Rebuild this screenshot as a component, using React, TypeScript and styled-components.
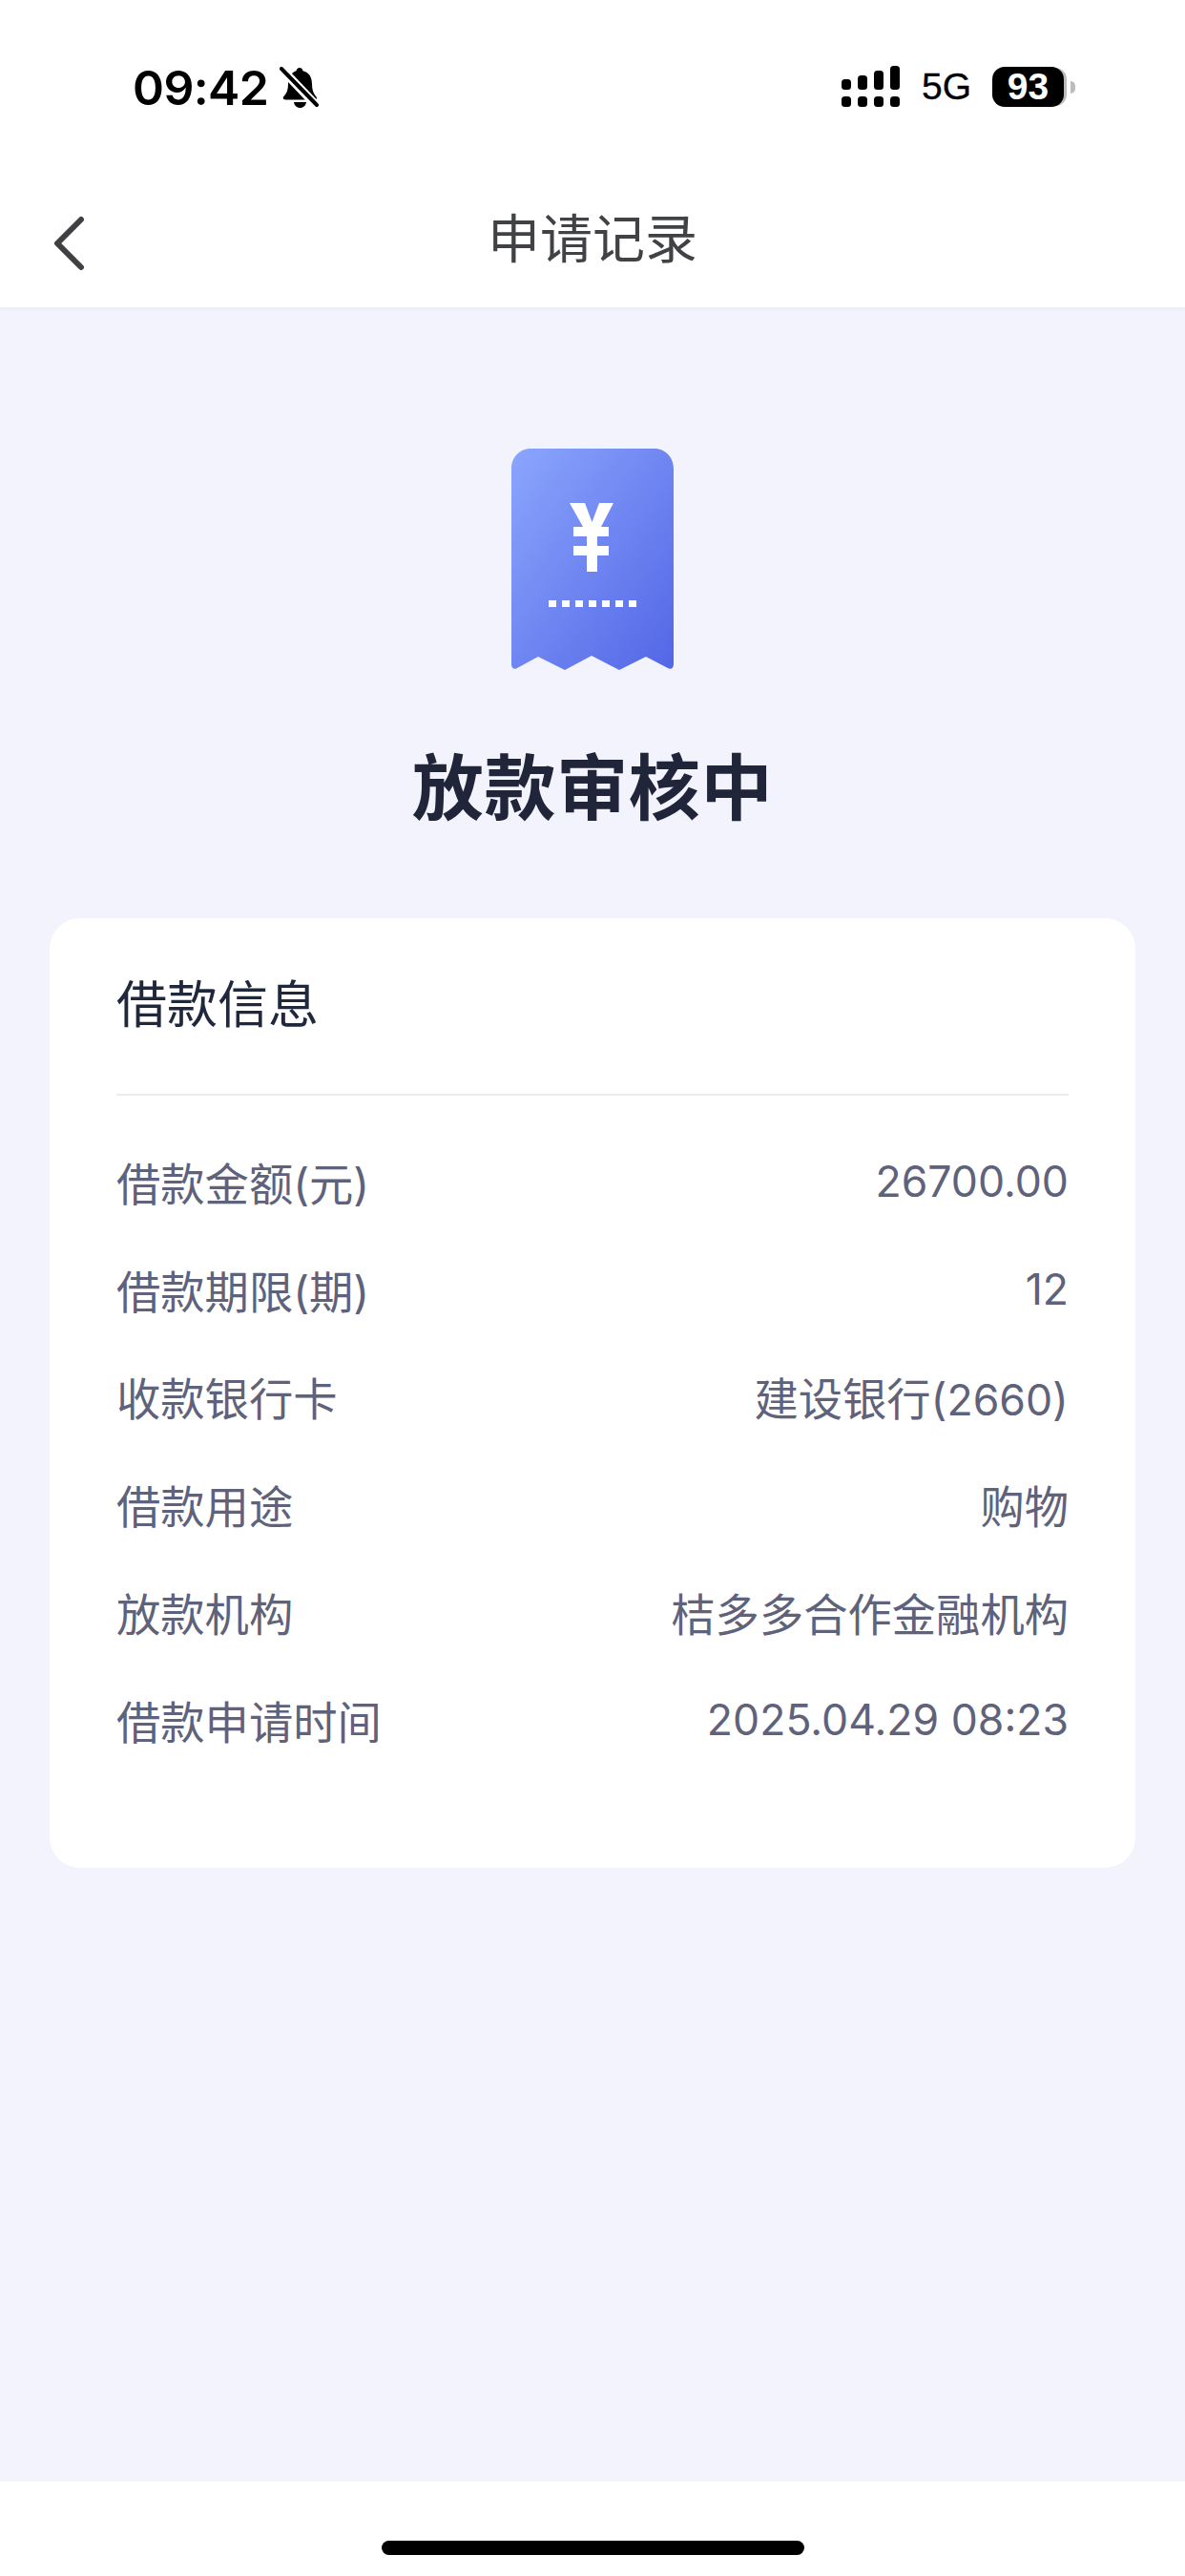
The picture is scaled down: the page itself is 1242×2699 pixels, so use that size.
import React from "react";
import styled, { createGlobalStyle } from "styled-components";

const Global = createGlobalStyle`
  html, body { margin: 0; padding: 0; background: #fff; }
  * { box-sizing: border-box; }
`;
const CJK = `"Noto Sans CJK SC", "Inter", sans-serif`;
const Page = styled.div`
  width: 1242px; height: 2699px; display: flex; flex-direction: column; background: #f2f3fd;
  font-family: "Inter", ${CJK}; overflow: hidden;
`;
const TopArea = styled.header`
  height: 322px; flex: none; background: #fff; display: flex; flex-direction: column;
  box-shadow: 0 1px 4px rgba(40, 50, 90, 0.06);
`;
const StatusBar = styled.div`
  height: 180px; flex: none; display: flex; justify-content: space-between; align-items: flex-start;
  padding: 64px 0 0 139px;
`;
const StatusLeft = styled.div`display: flex; align-items: center; gap: 12px; height: 56px;`;
const Clock = styled.span`
  font-family: "Inter", sans-serif; font-size: 50px; font-weight: 600; color: #000; line-height: 56px; letter-spacing: -0.6px;
`;
const StatusRight = styled.div`display: flex; align-items: center; height: 56px; margin-right: 115px;`;
const SignalIcon = styled.svg`flex: none; margin-bottom: 2px;`;
const NetLabel = styled.span`
  font-family: "Liberation Sans", sans-serif; font-size: 39px; color: #000; line-height: 56px; margin: 0 22px; margin-bottom: 2px; -webkit-text-stroke: 0.3px #000;
`;
const Battery = styled.div`
  width: 75px; height: 42px; margin-bottom: 2px; background: #000; border-radius: 13px; display: flex; align-items: center;
  justify-content: center; color: #fff; font-family: "Liberation Sans", sans-serif; font-weight: 700; font-size: 39px;
  box-shadow: 4px 0 0 -1px #bcbcbc;
`;
const Nub = styled.div`
  width: 5px; height: 13px; margin: 0 0 2px 7px; background: #bcbcbc; border-radius: 0 5px 5px 0;
`;
const NavBar = styled.nav`
  position: relative; flex: 1; display: flex; justify-content: center; padding-top: 34px;
`;
const NavTitle = styled.h1`
  margin: 0; font-family: ${CJK}; font-weight: 400; font-size: 55px; line-height: 64px; color: #404246;
`;
const Back = styled.svg`
  position: absolute; left: 50px; top: 44px; width: 42px; height: 60px;
`;
const Main = styled.main`
  flex: 1; display: flex; flex-direction: column; align-items: center; padding: 147px 52px 0;
`;
const Title = styled.h2`
  margin: 63px 0 0; font-family: ${CJK}; font-size: 75px; line-height: 110px; font-weight: 700; color: #20253a; letter-spacing: 0.7px;
`;
const Card = styled.section`
  width: 100%; height: 995px; margin-top: 86px; background: #fff; border-radius: 32px; padding: 0 70px;
`;
const CardHead = styled.div`
  height: 186px; display: flex; align-items: center; padding-bottom: 10px;
  border-bottom: 2px solid #ecedf0; font-family: ${CJK}; font-size: 53px; color: #20283c; font-weight: 400;
`;
const Rows = styled.div`display: flex; flex-direction: column; padding-top: 33px;`;
const Row = styled.div`
  height: 112.8px; display: flex; align-items: center; justify-content: space-between; color: #5f627b;
  font-size: 46.300px; font-family: "Inter", ${CJK};
`;
const Label = styled.span`font-family: "Inter", ${CJK};`;
const Value = styled.span`font-family: "Inter", ${CJK};`;
const Digits = styled.span`font-size: 44.600px;`;

const BellOff = () => (
  <svg width="42" height="44" viewBox="0 0 42 44">
    <path d="M21 1c2 0 3.2 1.3 3.4 3.2C31 5.8 34 11 34 18c0 6 1.4 10 4.5 13.5 1 1.2.3 3-1.3 3H6c-2 0-3-2-1.600-3.400C7.500 28 9 24 9 18c0-7 3-12 8.600-13.800C17.800 2.300 19 1 21 1z" fill="#000" />
    <path d="M15 37h13c-.5 3.500-3 6-6.500 6S15.500 40.500 15 37z" fill="#000" />
    <path d="M1 1 L39 41" stroke="#fff" strokeWidth="9" />
    <path d="M2 2 L39 40" stroke="#000" strokeWidth="4" strokeLinecap="round" />
  </svg>
);

const Signal = () => (
  <SignalIcon width="62" height="44" viewBox="0 0 62 44" fill="#000">
    <rect x="0" y="14" width="10" height="11" rx="3.500" />
    <rect x="17" y="10" width="10" height="15" rx="3.500" />
    <rect x="34" y="5" width="10" height="20" rx="3.500" />
    <rect x="51" y="0" width="10" height="25" rx="3.500" />
    <rect x="0" y="32" width="10" height="11" rx="3.500" />
    <rect x="17" y="32" width="10" height="11" rx="3.500" />
    <rect x="34" y="32" width="10" height="11" rx="3.500" />
    <rect x="51" y="32" width="10" height="11" rx="3.500" />
  </SignalIcon>
);

const Receipt = () => (
  <svg width="172" height="234" viewBox="0 0 172 234">
    <defs>
      <linearGradient id="rg" x1="0" y1="0" x2="1" y2="1">
        <stop offset="0" stopColor="#8ba6fd" />
        <stop offset="1" stopColor="#5366e6" />
      </linearGradient>
    </defs>
    <path d="M1 22C1 10 10 1 21 1H151C162 1 171 10 171 22V227C171 231 168 233 165 231L142 219L114 233L85 218L57 233L29 219L7 231C4 233 1 231 1 227Z" fill="url(#rg)" />
    <path d="M62 58H78L85.500 78L93 58H108L95 83H103V93H91V103H103V113H91V130H80V113H66V103H80V93H66V83H76Z" fill="#fff" />
    <g fill="#fff">
      <rect x="40" y="160" width="8" height="7" /><rect x="54" y="160" width="8" height="7" />
      <rect x="68" y="160" width="8" height="7" /><rect x="82" y="160" width="8" height="7" />
      <rect x="96" y="160" width="8" height="7" /><rect x="110" y="160" width="8" height="7" />
      <rect x="124" y="160" width="8" height="7" />
    </g>
  </svg>
);

const Footer = styled.footer`
  height: 99px; flex: none; background: #fff; display: flex; justify-content: center; padding-top: 62px;
`;
const HomeBar = styled.div`width: 443px; height: 15px; border-radius: 8px; background: #000;`;

const rows: [string, React.ReactNode][] = [
  ["借款金额(元)", <Digits>26700.00</Digits>],
  ["借款期限(期)", <Digits>12</Digits>],
  ["收款银行卡", <>建设银行(<Digits>2660</Digits>)</>],
  ["借款用途", "购物"],
  ["放款机构", "桔多多合作金融机构"],
  ["借款申请时间", <Digits>2025.04.29 08:23</Digits>],
];

export default function App() {
  return (
    <Page>
      <Global />
      <TopArea>
        <StatusBar>
          <StatusLeft>
            <Clock>09:42</Clock>
            <BellOff />
          </StatusLeft>
          <StatusRight>
            <Signal />
            <NetLabel>5G</NetLabel>
            <Battery>93</Battery>
            <Nub />
          </StatusRight>
        </StatusBar>
        <NavBar>
          <Back viewBox="0 0 42 60">
            <path d="M35 6 L10 31 L35 56" fill="none" stroke="#3f4044" strokeWidth="6" strokeLinecap="round" strokeLinejoin="round" />
          </Back>
          <NavTitle>申请记录</NavTitle>
        </NavBar>
      </TopArea>
      <Main>
        <Receipt />
        <Title>放款审核中</Title>
        <Card>
          <CardHead>借款信息</CardHead>
          <Rows>
            {rows.map(([l, v]) => (
              <Row key={l}>
                <Label>{l}</Label>
                <Value>{v}</Value>
              </Row>
            ))}
          </Rows>
        </Card>
      </Main>
      <Footer>
        <HomeBar />
      </Footer>
    </Page>
  );
}
